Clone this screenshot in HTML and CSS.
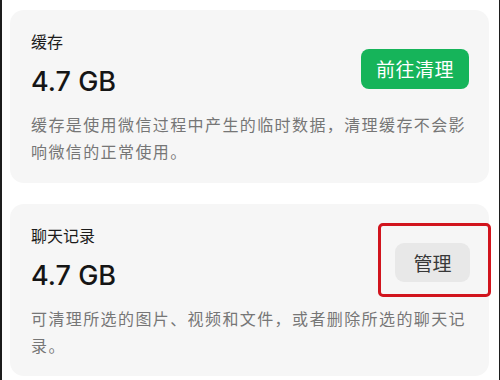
FILE: index.html
```html
<!DOCTYPE html>
<html lang="zh-CN">
<head>
<meta charset="utf-8">
<link rel="stylesheet" href="styles.css">
</head>
<body>
<div class="screen">
  <section class="card card-cache">
    <div class="card-head">
      <div class="info">
        <div class="title">缓存</div>
        <div class="size">4.7 GB</div>
      </div>
      <button class="btn btn-green">前往清理</button>
    </div>
    <p class="desc">缓存是使用微信过程中产生的临时数据，清理缓存不会影响微信的正常使用。</p>
  </section>
  <section class="card card-chat">
    <div class="card-head">
      <div class="info">
        <div class="title">聊天记录</div>
        <div class="size">4.7 GB</div>
      </div>
      <div class="btn-wrap">
        <button class="btn btn-gray">管理</button>
        <span class="highlight"></span>
      </div>
    </div>
    <p class="desc">可清理所选的图片、视频和文件，或者删除所选的聊天记录。</p>
  </section>
</div>
</body>
</html>
```
FILE: styles.css
```css
html, body {
  margin: 0;
  padding: 0;
  background: #ffffff;
}
body {
  font-family: "Noto Sans CJK SC", "Noto Sans", sans-serif;
}
.screen {
  box-sizing: border-box;
  width: 500px;
  height: 380px;
  border-left: 2px solid #1e1e1e;
  border-right: 1px solid #1e1e1e;
  padding: 10px 10px 0 8px;
  display: flex;
  flex-direction: column;
  gap: 21px;
  overflow: hidden;
}
.card {
  background: #f6f6f6;
  border-radius: 14px;
  padding: 20px 20px 18px 21px;
}
.card-chat {
  padding-bottom: 17px;
}
.card-head {
  display: flex;
  justify-content: space-between;
  align-items: flex-start;
}
.title {
  font-size: 16px;
  line-height: 22px;
  color: #1c1c1c;
}
.size {
  margin-top: 13px;
  font-family: Inter, Roboto, "Noto Sans", sans-serif;
  font-weight: 500;
  font-size: 27px;
  line-height: 34px;
  color: #151515;
}
.btn {
  font-family: "Noto Sans CJK SC", sans-serif;
  border: none;
  margin: 0;
  font-size: 19px;
  line-height: 40px;
  padding: 0;
  text-align: center;
  border-radius: 8px;
}
.btn-green {
  margin-top: 19px;
  width: 108px;
  height: 40px;
  background: #16b45a;
  color: #ffffff;
  letter-spacing: 0.5px;
}
.btn-wrap {
  position: relative;
  margin-top: 19px;
  margin-right: -1px;
}
.btn-gray {
  display: block;
  width: 75px;
  height: 39px;
  line-height: 39px;
  background: #e8e8e8;
  color: #383838;
  border-radius: 9px;
}
.highlight {
  position: absolute;
  top: -20px;
  left: -17px;
  right: -21px;
  bottom: -15px;
  border: 3px solid #d1141d;
  border-radius: 5px;
}
.desc {
  margin: 12px 0 0;
  font-size: 16px;
  line-height: 27px;
  letter-spacing: 1.4px;
  color: #767676;
}
```
